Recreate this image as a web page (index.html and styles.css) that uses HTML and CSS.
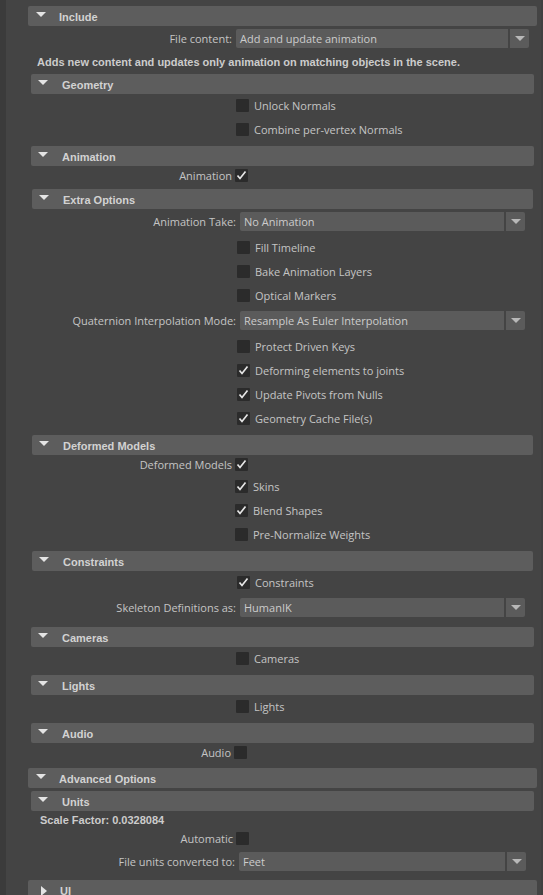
FILE: index.html
```html
<!DOCTYPE html>
<html>
<head>
<meta charset="utf-8">
<link rel="stylesheet" href="styles.css">
</head>
<body>
<div class="panel">

  <section class="frame top">
    <div class="hdr"><span class="tri"></span>Include</div>
    <div class="body">
      <div class="row select tight">
        <span class="lab">File content:</span>
        <div class="dd"><span class="dd-val">Add and update animation</span><span class="dd-btn"></span></div>
      </div>
      <div class="note">Adds new content and updates only animation on matching objects in the scene.</div>

      <section class="frame">
        <div class="hdr"><span class="tri"></span>Geometry</div>
        <div class="row check"><span class="box"></span><span class="txt">Unlock Normals</span></div>
        <div class="row check"><span class="box"></span><span class="txt">Combine per-vertex Normals</span></div>
      </section>

      <section class="frame cb204">
        <div class="hdr"><span class="tri"></span>Animation</div>
        <div class="row inline"><span class="lab">Animation</span><span class="box on"><svg viewBox="0 0 13 13"><polyline points="2.5,6.5 5,9.5 10.5,2.5"/></svg></span></div>
      </section>

      <section class="frame inset">
        <div class="hdr"><span class="tri"></span>Extra Options</div>
        <div class="row select">
          <span class="lab">Animation Take:</span>
          <div class="dd"><span class="dd-val">No Animation</span><span class="dd-btn"></span></div>
        </div>
        <div class="row check"><span class="box"></span><span class="txt">Fill Timeline</span></div>
        <div class="row check"><span class="box"></span><span class="txt">Bake Animation Layers</span></div>
        <div class="row check"><span class="box"></span><span class="txt">Optical Markers</span></div>
        <div class="row select">
          <span class="lab">Quaternion Interpolation Mode:</span>
          <div class="dd"><span class="dd-val">Resample As Euler Interpolation</span><span class="dd-btn"></span></div>
        </div>
        <div class="row check"><span class="box"></span><span class="txt">Protect Driven Keys</span></div>
        <div class="row check"><span class="box on"><svg viewBox="0 0 13 13"><polyline points="2.5,6.5 5,9.5 10.5,2.5"/></svg></span><span class="txt">Deforming elements to joints</span></div>
        <div class="row check"><span class="box on"><svg viewBox="0 0 13 13"><polyline points="2.5,6.5 5,9.5 10.5,2.5"/></svg></span><span class="txt">Update Pivots from Nulls</span></div>
        <div class="row check"><span class="box on"><svg viewBox="0 0 13 13"><polyline points="2.5,6.5 5,9.5 10.5,2.5"/></svg></span><span class="txt">Geometry Cache File(s)</span></div>
      </section>

      <section class="frame inset cb203">
        <div class="hdr"><span class="tri"></span>Deformed Models</div>
        <div class="row inline tall"><span class="lab">Deformed Models</span><span class="box on"><svg viewBox="0 0 13 13"><polyline points="2.5,6.5 5,9.5 10.5,2.5"/></svg></span></div>
        <div class="row check"><span class="box on"><svg viewBox="0 0 13 13"><polyline points="2.5,6.5 5,9.5 10.5,2.5"/></svg></span><span class="txt">Skins</span></div>
        <div class="row check"><span class="box on"><svg viewBox="0 0 13 13"><polyline points="2.5,6.5 5,9.5 10.5,2.5"/></svg></span><span class="txt">Blend Shapes</span></div>
        <div class="row check"><span class="box"></span><span class="txt">Pre-Normalize Weights</span></div>
      </section>

      <section class="frame inset">
        <div class="hdr"><span class="tri"></span>Constraints</div>
        <div class="row check"><span class="box on"><svg viewBox="0 0 13 13"><polyline points="2.5,6.5 5,9.5 10.5,2.5"/></svg></span><span class="txt">Constraints</span></div>
        <div class="row select loose">
          <span class="lab">Skeleton Definitions as:</span>
          <div class="dd"><span class="dd-val">HumanIK</span><span class="dd-btn"></span></div>
        </div>
      </section>

      <section class="frame">
        <div class="hdr"><span class="tri"></span>Cameras</div>
        <div class="row check"><span class="box"></span><span class="txt">Cameras</span></div>
      </section>

      <section class="frame">
        <div class="hdr"><span class="tri"></span>Lights</div>
        <div class="row check"><span class="box"></span><span class="txt">Lights</span></div>
      </section>

      <section class="frame cb203">
        <div class="hdr"><span class="tri"></span>Audio</div>
        <div class="row inline"><span class="lab">Audio</span><span class="box"></span></div>
      </section>
    </div>
  </section>

  <section class="frame top">
    <div class="hdr"><span class="tri"></span>Advanced Options</div>
    <div class="body">
      <section class="frame">
        <div class="hdr"><span class="tri"></span>Units</div>
        <div class="scale">Scale Factor: 0.0328084</div>
        <div class="row inline"><span class="lab">Automatic</span><span class="box"></span></div>
        <div class="row select last">
          <span class="lab">File units converted to:</span>
          <div class="dd"><span class="dd-val">Feet</span><span class="dd-btn"></span></div>
        </div>
      </section>
    </div>
  </section>

  <section class="frame top">
    <div class="hdr closed"><span class="tri"></span>UI</div>
  </section>

</div>
</body>
</html>
```

FILE: styles.css
```css
* { box-sizing: border-box; }

html, body {
  margin: 0;
  height: 100%;
}

body {
  background: #444444;
  font-family: "Open Sans", "Liberation Sans", Arial, sans-serif;
  font-size: 11px;
  color: #c4c4c4;
  overflow: hidden;
}

.panel {
  min-height: 100%;
  border-left: 6px solid #3b3b3b;
  border-right: 2px solid #404040;
  padding: 6px 4px 0 22px;
}

/* ---------- frames ---------- */
.frame {
  --cb: 205px;
  --dd: 208px;
  display: block;
}

.frame.top + .frame.top { margin-top: 4px; }

.frame.top > .body { padding-bottom: 2px; }

.body > .frame { margin: 4px 3px 0; }
.body > .frame.inset { margin: 4px 4px 0; }
.body > .frame:first-child { margin-top: 3px; }

.frame.cb204 { --cb: 204px; }
.frame.cb203 { --cb: 203px; }

.hdr {
  height: 20px;
  background: #5d5d5d;
  border-radius: 2px;
  display: flex;
  align-items: center;
  padding-left: 7px;
  font-family: "Liberation Sans", Arial, sans-serif;
  font-weight: bold;
  color: #d2d2d2;
  line-height: 20px;
  padding-top: 1px;
}

.frame.top > .hdr { padding-left: 8px; }

.tri {
  width: 0;
  height: 0;
  border-left: 5px solid transparent;
  border-right: 5px solid transparent;
  border-top: 5px solid #e4e4e4;
  margin-right: 14px;
  margin-top: -5px;
  flex: none;
}

.frame.top > .hdr .tri { margin-right: 13px; }

.hdr.closed .tri {
  border-top: 5px solid transparent;
  border-bottom: 5px solid transparent;
  border-left: 6px solid #e4e4e4;
  border-right: 0;
  margin: 0 12px 0 5px;
}

/* ---------- rows ---------- */
.row {
  display: flex;
  align-items: center;
}

.row.check {
  height: 24px;
  padding-top: 5px;
  padding-left: var(--cb);
  align-items: flex-start;
}

.row.check .txt {
  margin-left: 5px;
  line-height: 13px;
}

.row.inline {
  height: 19px;
  padding-top: 3px;
  align-items: flex-start;
}

.row.inline.tall { height: 20px; }

.row.inline .lab {
  width: var(--cb);
  flex: none;
  text-align: right;
  padding-right: 3px;
  line-height: 13px;
}

.row.select {
  padding: 3px 8px 5px 0;
}

.row.select.tight { padding-bottom: 3px; }
.row.select.loose { padding-bottom: 6px; }
.row.select.last { padding-top: 4px; padding-bottom: 3px; }

.row.select .lab {
  width: var(--dd);
  flex: none;
  text-align: right;
  padding-right: 4px;
  white-space: nowrap;
  line-height: 19px;
}

.box {
  width: 13px;
  height: 13px;
  flex: none;
  background: #2b2b2b;
  border-radius: 1px;
  display: block;
}

.box svg {
  display: block;
  width: 13px;
  height: 13px;
}

.box polyline {
  fill: none;
  stroke: #e6e6e6;
  stroke-width: 1.7;
}

/* ---------- dropdown ---------- */
.dd {
  flex: 1;
  display: flex;
  height: 19px;
  gap: 2px;
}

.dd-val {
  flex: 1;
  background: #5b5b5b;
  border-radius: 2px 0 0 2px;
  padding-left: 4px;
  line-height: 19px;
  color: #cccccc;
}

.dd-btn {
  width: 19px;
  flex: none;
  background: #5b5b5b;
  border-radius: 0 2px 2px 0;
  display: flex;
  align-items: center;
  justify-content: center;
}

.dd-btn::after {
  content: "";
  width: 0;
  height: 0;
  border-left: 5px solid transparent;
  border-right: 5px solid transparent;
  border-top: 5px solid #b8b8b8;
  margin-top: -1px;
}

/* ---------- text rows ---------- */
.note {
  padding: 3px 0 0 9px;
  line-height: 16px;
  font-family: "Liberation Sans", Arial, sans-serif;
  font-weight: bold;
  color: #cccccc;
  white-space: nowrap;
}

.scale {
  padding-left: 9px;
  line-height: 18px;
  font-family: "Liberation Sans", Arial, sans-serif;
  font-weight: bold;
  color: #cccccc;
}
```
